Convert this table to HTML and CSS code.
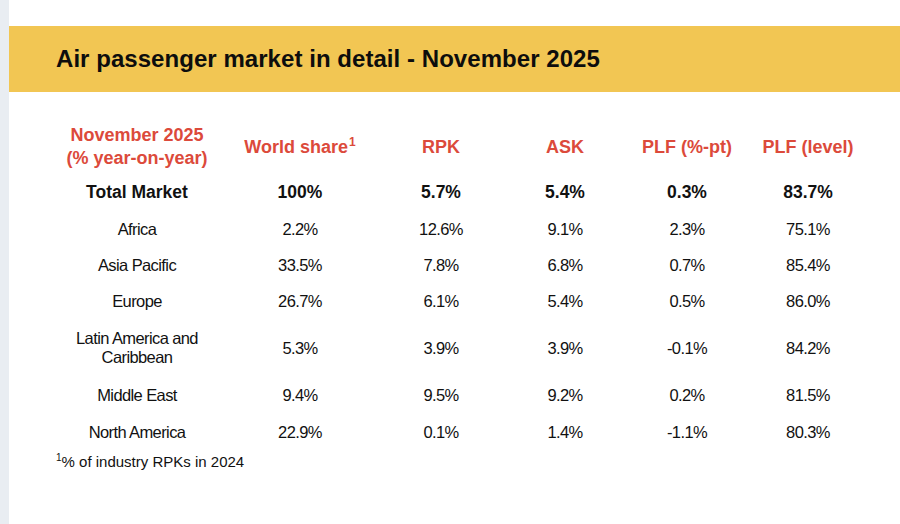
FILE: index.html
```html
<!DOCTYPE html>
<html lang="en">
<head>
<meta charset="utf-8">
<title>Air passenger market in detail - November 2025</title>
<link rel="stylesheet" href="styles.css">
</head>
<body>
<div class="page">
  <div class="strip"></div>
  <main class="main">
    <header class="band">
      <h1 class="title">Air passenger market in detail - November 2025</h1>
    </header>
    <div class="table">
      <div class="cell head">November 2025<br>(% year-on-year)</div>
      <div class="cell head">World share<sup class="sup">1</sup></div>
      <div class="cell head">RPK</div>
      <div class="cell head">ASK</div>
      <div class="cell head">PLF (%-pt)</div>
      <div class="cell head">PLF (level)</div>

      <div class="cell total">Total Market</div>
      <div class="cell total">100%</div>
      <div class="cell total">5.7%</div>
      <div class="cell total">5.4%</div>
      <div class="cell total">0.3%</div>
      <div class="cell total">83.7%</div>

      <div class="cell">Africa</div>
      <div class="cell">2.2%</div>
      <div class="cell">12.6%</div>
      <div class="cell">9.1%</div>
      <div class="cell">2.3%</div>
      <div class="cell">75.1%</div>

      <div class="cell">Asia Pacific</div>
      <div class="cell">33.5%</div>
      <div class="cell">7.8%</div>
      <div class="cell">6.8%</div>
      <div class="cell">0.7%</div>
      <div class="cell">85.4%</div>

      <div class="cell">Europe</div>
      <div class="cell">26.7%</div>
      <div class="cell">6.1%</div>
      <div class="cell">5.4%</div>
      <div class="cell">0.5%</div>
      <div class="cell">86.0%</div>

      <div class="cell">Latin America and<br>Caribbean</div>
      <div class="cell">5.3%</div>
      <div class="cell">3.9%</div>
      <div class="cell">3.9%</div>
      <div class="cell">-0.1%</div>
      <div class="cell">84.2%</div>

      <div class="cell">Middle East</div>
      <div class="cell">9.4%</div>
      <div class="cell">9.5%</div>
      <div class="cell">9.2%</div>
      <div class="cell">0.2%</div>
      <div class="cell">81.5%</div>

      <div class="cell">North America</div>
      <div class="cell">22.9%</div>
      <div class="cell">0.1%</div>
      <div class="cell">1.4%</div>
      <div class="cell">-1.1%</div>
      <div class="cell">80.3%</div>
    </div>
    <p class="note"><sup class="note-sup">1</sup>% of industry RPKs in 2024</p>
  </main>
</div>
</body>
</html>
```
FILE: styles.css
```css
html, body {
  margin: 0;
  padding: 0;
  background: #ffffff;
}

body {
  font-family: "Liberation Sans", Arial, Helvetica, sans-serif;
  color: #111111;
}

.page {
  display: flex;
  width: 900px;
  height: 524px;
  overflow: hidden;
}

.strip {
  width: 9px;
  flex: none;
  background: #e9edf2;
}

.main {
  flex: 1;
  display: flex;
  flex-direction: column;
}

.band {
  margin-top: 26px;
  height: 66px;
  background: #f2c653;
  display: flex;
  align-items: center;
  padding-left: 47px;
}

.title {
  margin: 0;
  font-size: 24px;
  font-weight: 700;
  color: #0d0d0d;
  letter-spacing: 0.05px;
}

.table {
  margin-top: 28px;
  margin-left: 47px;
  display: grid;
  grid-template-columns: 162px 164px 118px 130px 114px 128px;
  grid-template-rows: 54px 37px 36px 36px 36px 58px 37px 36px;
  align-items: center;
  justify-items: center;
  text-align: center;
}

.cell {
  font-size: 16.5px;
  line-height: 19px;
  letter-spacing: -0.6px;
}

.head {
  color: #dc4a3b;
  font-weight: 700;
  font-size: 18px;
  line-height: 23px;
  letter-spacing: 0;
}

.sup {
  font-size: 12px;
  line-height: 0;
  vertical-align: 7px;
  margin-left: 1px;
}

.total {
  font-weight: 700;
  font-size: 17.5px;
  letter-spacing: 0;
}

.note {
  margin: 3px 0 0 47px;
  font-size: 15px;
  line-height: 18px;
}

.note-sup {
  font-size: 10px;
  line-height: 0;
  vertical-align: 6px;
}
```
